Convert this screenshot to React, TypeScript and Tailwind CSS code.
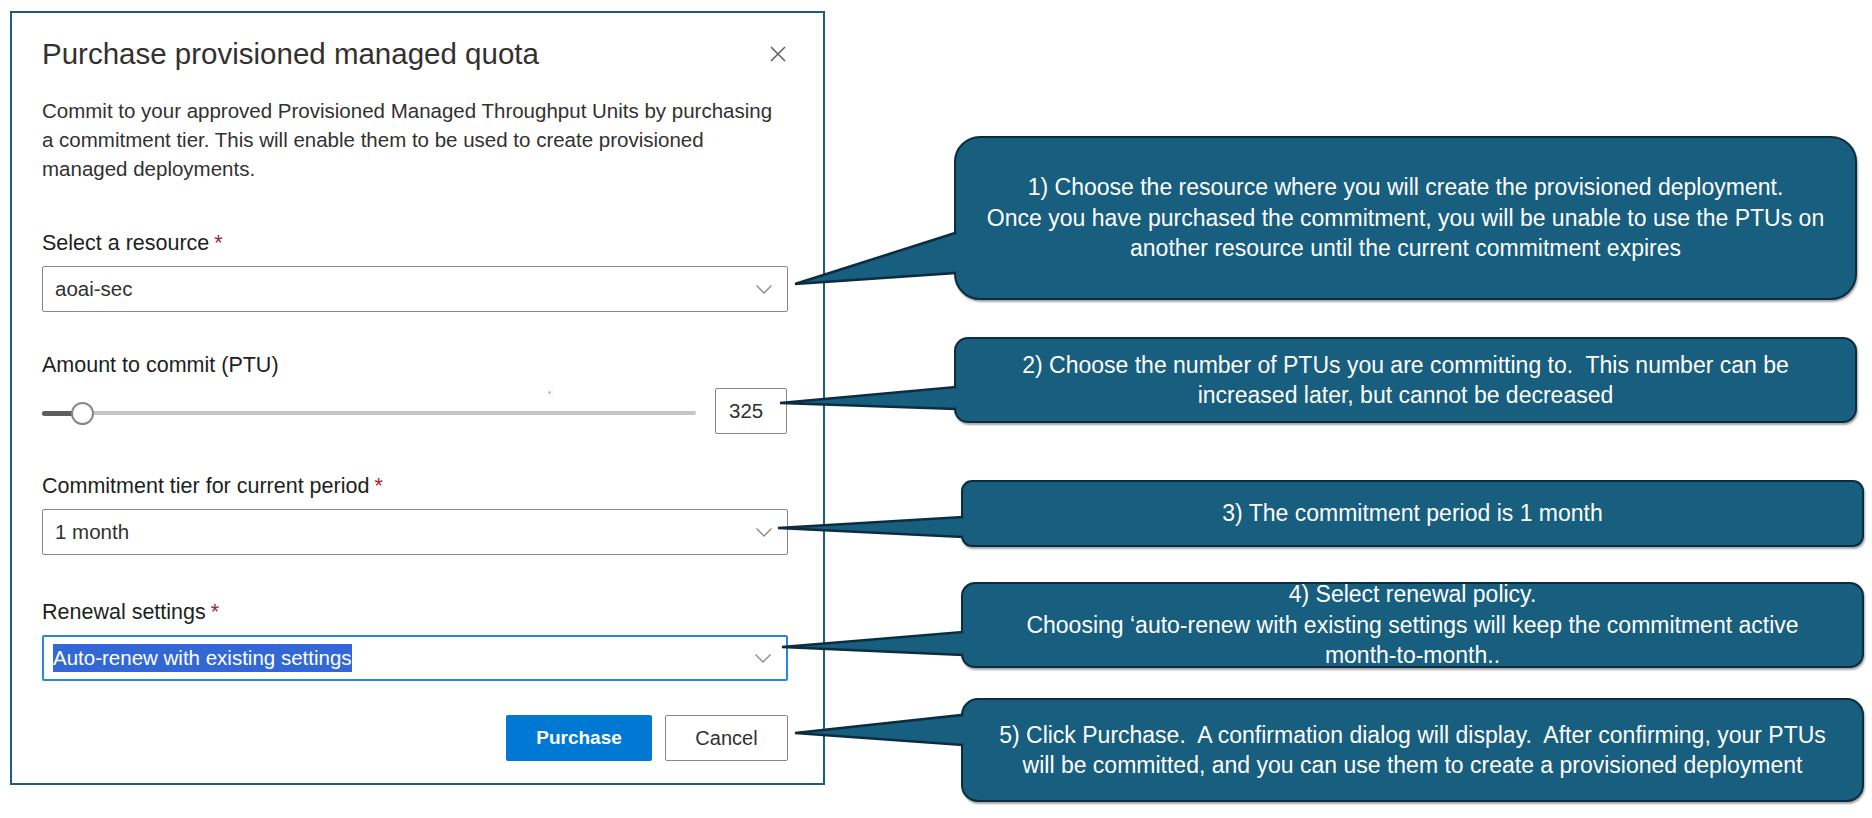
import React from 'react'

const CALLOUT_FILL = '#175e7f'
const CALLOUT_EDGE = '#0c2c40'

// pointer wedges: base on the callout's left edge, tip at the form control
const wedges = [
  { bx: 954, y1: 233, y2: 273, tx: 795, ty: 284 },
  { bx: 954, y1: 387, y2: 409, tx: 780, ty: 403 },
  { bx: 961, y1: 517, y2: 537, tx: 778, ty: 528 },
  { bx: 961, y1: 632, y2: 655, tx: 782, ty: 647 },
  { bx: 961, y1: 715, y2: 745, tx: 795, ty: 733 },
]

function Chevron() {
  return (
    <svg width="16" height="9" viewBox="0 0 16 9" className="shrink-0">
      <polyline points="0.5,0.5 8,8 15.5,0.5" fill="none" stroke="#8a8886" strokeWidth="1.3" />
    </svg>
  )
}

function Label({ text, required, className }: { text: string; required?: boolean; className: string }) {
  return (
    <div className={`${className} h-[28px] text-[21.5px] leading-[28px] text-[#201f1e]`}>
      {text}
      {required && <span className="ml-[5px] text-[#a4262c]">*</span>}
    </div>
  )
}

function Select({ value }: { value: string }) {
  return (
    <div className="mt-[9px] flex h-[46px] items-center justify-between rounded-[2px] border-[1.5px] border-[#8a8886] pl-[12px] pr-[15px]">
      <span className="text-[20.5px] text-[#323130]">{value}</span>
      <Chevron />
    </div>
  )
}

function Callout({ className, lines }: { className: string; lines: string[] }) {
  return (
    <div
      className={`${className} flex w-[903px] flex-col items-center justify-center border-[2.5px] border-[#0c2c40] bg-[#175e7f] text-center text-[23px] leading-[30.5px] text-white shadow-[1px_2px_2px_rgba(0,0,0,0.35)]`}
    >
      {lines.map((l, i) => (
        <div key={i} className="whitespace-pre">
          {l}
        </div>
      ))}
    </div>
  )
}

export default function App() {
  return (
    <div className="relative flex h-[818px] w-[1872px] items-start overflow-hidden bg-white font-['Liberation_Sans',Arial,sans-serif]">
      {/* dialog */}
      <div className="ml-[10px] mt-[11px] flex h-[774px] w-[815px] shrink-0 flex-col border-2 border-[#1d5c82] pl-[30px] pr-[35px] pt-[23px]">
        <div className="flex h-[36px] items-center justify-between">
          <h1 className="text-[29.5px] leading-[36px] text-[#323130]">Purchase provisioned managed quota</h1>
          <svg width="16" height="16" viewBox="0 0 16 16" className="mr-[2px]">
            <path d="M1 1 L15 15 M15 1 L1 15" stroke="#605e5c" strokeWidth="1.5" />
          </svg>
        </div>

        <p className="mt-[24px] text-[20.5px] leading-[29px] text-[#323130]">
          Commit to your approved Provisioned Managed Throughput Units by purchasing
          <br />
          a commitment tier. This will enable them to be used to create provisioned
          <br />
          managed deployments.
        </p>

        <Label className="mt-[46px]" text="Select a resource" required />
        <Select value="aoai-sec" />

        <Label className="mt-[39px]" text="Amount to commit (PTU)" />
        <div className="mt-[9px] flex h-[46px] items-start gap-[19px]">
          <div className="relative mt-[23px] h-[4px] w-[654px] rounded-full bg-[#c8c6c4]">
            <div className="absolute left-0 top-[-0.5px] h-[5px] w-[34px] rounded-full bg-[#5f5e5c]" />
            <div className="absolute left-[29px] top-[-9.5px] h-[23px] w-[23px] rounded-full border-2 border-[#8a8886] bg-white" />
          </div>
          <div className="flex h-[46px] w-[72px] items-center rounded-[2px] border-[1.5px] border-[#8a8886] pl-[13px] text-[20.5px] text-[#323130]">
            325
          </div>
        </div>

        <Label className="mt-[38px]" text="Commitment tier for current period" required />
        <Select value="1 month" />

        <Label className="mt-[43px]" text="Renewal settings" required />
        <div className="mt-[9px] flex h-[46px] items-center justify-between rounded-[2px] border-2 border-[#2886de] pl-[9px] pr-[15px]">
          <span className="bg-[#3367d6] text-[20.5px] leading-[28px] text-white">Auto-renew with existing settings</span>
          <Chevron />
        </div>

        <div className="mt-[34px] flex justify-end gap-[13px]">
          <button className="h-[46px] w-[146px] rounded-[2px] bg-[#0078d4] text-[19px] font-semibold text-white">
            Purchase
          </button>
          <button className="h-[46px] w-[123px] rounded-[2px] border-[1.5px] border-[#8a8886] bg-white text-[20px] text-[#323130]">
            Cancel
          </button>
        </div>
      </div>

      {/* callouts */}
      <div className="flex flex-col">
        <Callout
          className="ml-[129px] mt-[136px] h-[164px] rounded-[26px]"
          lines={[
            '1) Choose the resource where you will create the provisioned deployment.',
            'Once you have purchased the commitment, you will be unable to use the PTUs on',
            'another resource until the current commitment expires',
          ]}
        />
        <Callout
          className="ml-[129px] mt-[37px] h-[86px] rounded-[14px]"
          lines={[
            '2) Choose the number of PTUs you are committing to.  This number can be',
            'increased later, but cannot be decreased',
          ]}
        />
        <Callout
          className="ml-[136px] mt-[57px] h-[67px] rounded-[11px]"
          lines={['3) The commitment period is 1 month']}
        />
        <Callout
          className="ml-[136px] mt-[35px] h-[86px] rounded-[14px]"
          lines={[
            '4) Select renewal policy.',
            'Choosing \u2018auto-renew with existing settings will keep the commitment active',
            'month-to-month..',
          ]}
        />
        <Callout
          className="ml-[136px] mt-[30px] h-[104px] rounded-[17px]"
          lines={[
            '5) Click Purchase.  A confirmation dialog will display.  After confirming, your PTUs',
            'will be committed, and you can use them to create a provisioned deployment',
          ]}
        />
      </div>

      {/* stray pink pixel in the capture */}
      <div className="absolute left-[548px] top-[391px] h-[3px] w-[3px] rounded-full bg-[#f3a9b8]" />

      <svg className="pointer-events-none absolute inset-0" width="1872" height="818">
        {wedges.map((w, i) => (
          <g key={i}>
            <polygon
              points={`${w.tx},${w.ty} ${w.bx + 1},${w.y1} ${w.bx + 1},${w.y2}`}
              fill={CALLOUT_FILL}
              stroke={CALLOUT_EDGE}
              strokeWidth="2.5"
              strokeLinejoin="miter"
            />
            <rect x={w.bx - 1.5} y={w.y1 + 1.5} width="7" height={w.y2 - w.y1 - 3} fill={CALLOUT_FILL} />
          </g>
        ))}
      </svg>
    </div>
  )
}
